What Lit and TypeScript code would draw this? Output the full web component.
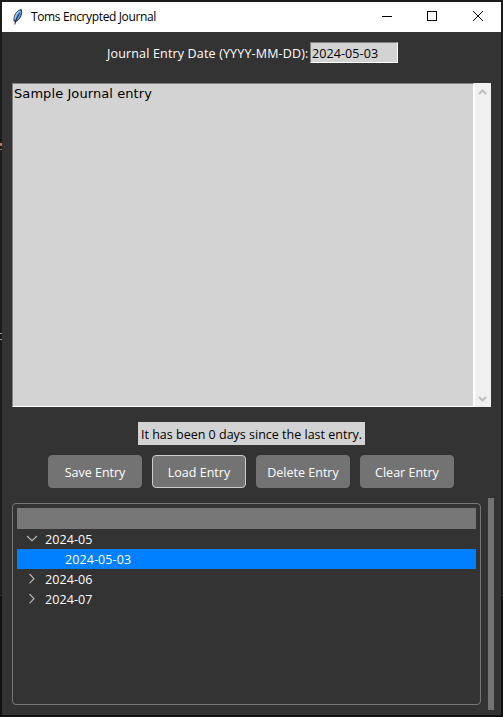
import { LitElement, html, css, svg, nothing } from "lit";
import { customElement, property, state } from "lit/decorators.js";
import { classMap } from "lit/directives/class-map.js";

@customElement("title-bar")
class TitleBar extends LitElement {
  @property() caption = "";
  static styles = css`
    :host { display: flex; align-items: center; height: 30px; background: #fff; color: #000; }
    .feather { width: 16px; height: 18px; margin: 0 6px 0 7px; flex: none; }
    .caption { flex: 1; font-size: 12px; line-height: 16px; letter-spacing: -0.37px; white-space: nowrap; }
    .control { width: 45px; height: 30px; flex: none; }
    .control svg { display: block; width: 45px; height: 30px; }
  `;
  render() {
    const control = (shape: unknown) => html`<div class="control">
      <svg viewBox="0 0 45 30" fill="none" stroke="#000" stroke-width="1">${shape}</svg>
    </div>`;
    return html`
      <svg class="feather" viewBox="0 0 16 18">
        <path d="M5.2 13.2C4.4 9.5 6 4.5 10.3 2.2L12.3 1.6L12.7 4.5C12.4 8.5 10.5 11.5 7 13.6Z" fill="#5b97dc" stroke="#18222e" stroke-width="0.9"/>
        <path d="M6.3 11C6.2 8 7.7 5 10.6 3" fill="none" stroke="#a4caf2" stroke-width="1.3"/>
        <path d="M10.4 5.6C8.6 8.5 7 11 5.8 16.5" fill="none" stroke="#111" stroke-width="0.9"/>
      </svg>
      <span class="caption">${this.caption}</span>
      ${control(svg`<path d="M16 14.5H26"/>`)}
      ${control(svg`<rect x="16.5" y="9.5" width="9" height="9"/>`)}
      ${control(svg`<path d="M17 9L27 19M27 9L17 19"/>`)}
    `;
  }
}

@customElement("journal-tree")
class JournalTree extends LitElement {
  @property({ attribute: false }) months: { name: string; open: boolean; days: string[] }[] = [];
  @property() selected = "";
  static styles = css`
    :host { display: block; box-sizing: border-box; border: 1px solid #777; border-radius: 4px; padding: 4px; }
    .heading { height: 21px; background: #777; }
    .row { display: flex; align-items: center; height: 20px; color: #fff; font-size: 12.5px; letter-spacing: 0.1px; }
    .row svg { width: 12px; height: 12px; margin: 0 7px 0 9px; flex: none; }
    .day { padding-left: 48px; }
    .selected { background: #007fff; }
  `;
  render() {
    return html`<div class="heading"></div>
      ${this.months.map((m) => html`
        <div class="row">
          <svg viewBox="0 0 12 12" fill="none" stroke="#bcbcbc" stroke-width="1.1">
            <path d=${m.open ? "M1 3L6 7.7L11 3" : "M3.5 1L8 5.7L3.5 10.4"}/>
          </svg>
          <span>${m.name}</span>
        </div>
        ${m.open ? m.days.map((d) => html`
          <div class=${classMap({ row: true, day: true, selected: d === this.selected })}>${d}</div>`) : nothing}
      `)}`;
  }
}

@customElement("app-root")
class AppRoot extends LitElement {
  @state() date = "2024-05-03";
  @state() text = "Sample Journal entry";
  @state() months = [
    { name: "2024-05", open: true, days: ["2024-05-03"] },
    { name: "2024-06", open: false, days: [] },
    { name: "2024-07", open: false, days: [] },
  ];
  static styles = css`
    /* The desktop shows as a thin edge around the window, with slivers of the editor behind it. */
    :host { display: block; box-sizing: border-box; width: 503px; height: 717px; padding: 2px; overflow: hidden;
      background:
        linear-gradient(#b5795a 0 3px, transparent 3px 6px, #b5795a 6px) 0 143px / 2px 7px no-repeat,
        linear-gradient(#8fa9b3 0 1px, transparent 1px 6px, #8fa9b3 6px) 0 333px / 2px 7px no-repeat,
        linear-gradient(#1c1b1b 0 595px, #303030 595px 596px, #111 596px);
      font-family: "Open Sans", "Noto Sans", sans-serif; }
    .window { display: flex; flex-direction: column; height: 713px; background: #333; }
    .date { display: flex; align-items: center; height: 21px; margin: 10px 0 0 105px; color: #fff; font-size: 12.5px; white-space: nowrap; }
    .date-label { width: 203px; padding-top: 1px; letter-spacing: 0.16px; }
    .date-field { box-sizing: border-box; width: 88px; height: 21px; padding: 0 1px; line-height: 21px; letter-spacing: 0.1px;
      background: #d3d3d3; color: #000; border: 1px solid; border-color: #808080 #fff #fff #808080; }
    .editor { display: flex; height: 324px; margin: 20px 10px 0; }
    .page { flex: none; box-sizing: border-box; width: 462px; padding: 2px 1px; background: #d3d3d3; color: #000; letter-spacing: 0.08px;
      border: 1px solid; border-color: #808080 #fff #fff #808080; font: 13px/16px "DejaVu Sans", sans-serif; }
    .scroll { display: flex; flex: none; width: 17px; flex-direction: column; justify-content: space-between; box-sizing: border-box;
      background: #f0f0f0; border-left: 1px solid #fff; }
    .scroll svg { width: 16px; height: 17px; }
    .status { align-self: flex-start; box-sizing: border-box; width: 227px; height: 23px; margin: 15px 0 0 136px; padding-left: 3px;
      line-height: 25px; background: #d3d3d3; color: #000; font-size: 12.5px; white-space: nowrap; }
    .buttons { display: flex; gap: 10px; margin: 10px 0 0 46px; }
    .button { display: flex; align-items: center; justify-content: center; box-sizing: border-box; width: 94px; height: 33px;
      padding-top: 1px; border: 1px solid #737373; border-radius: 4px; background: #737373; color: #fff; font-size: 12.5px; }
    .active { border-color: #ccc; }
    .entries { display: flex; margin: 10px 7px 0 10px; justify-content: space-between; }
    journal-tree { width: 469px; height: 202px; margin-top: 5px; }
    .track { width: 6px; height: 212px; background: #737373; }
  `;
  render() {
    return html`<div class="window">
      <title-bar caption="Toms Encrypted Journal"></title-bar>
      <div class="date">
        <span class="date-label">Journal Entry Date (YYYY-MM-DD):</span>
        <div class="date-field">${this.date}</div>
      </div>
      <div class="editor">
        <div class="page">${this.text}</div>
        <div class="scroll">
          <svg viewBox="0 0 16 17" fill="none" stroke="#bfbfbf" stroke-width="2"><path d="M4 11L7.5 7.5L11 11"/></svg>
          <svg viewBox="0 0 16 17" fill="none" stroke="#bfbfbf" stroke-width="2"><path d="M4 7L7.5 10.5L11 7"/></svg>
        </div>
      </div>
      <div class="status">It has been 0 days since the last entry.</div>
      <div class="buttons">
        ${["Save Entry", "Load Entry", "Delete Entry", "Clear Entry"].map((b) => html`
          <div class=${classMap({ button: true, active: b === "Load Entry" })}>${b}</div>`)}
      </div>
      <div class="entries">
        <journal-tree .months=${this.months} selected=${this.date}></journal-tree>
        <div class="track"></div>
      </div>
    </div>`;
  }
}
